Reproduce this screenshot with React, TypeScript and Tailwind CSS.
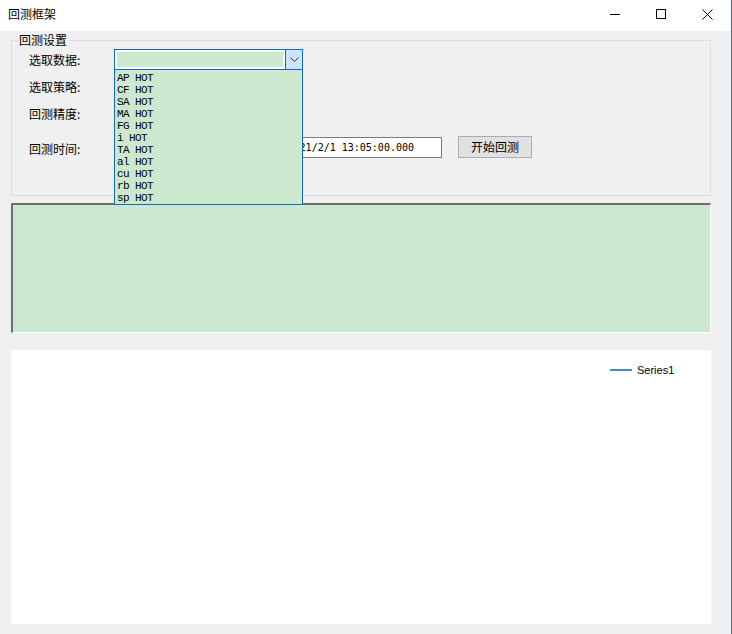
const ITEMS = ["AP HOT", "CF HOT", "SA HOT", "MA HOT", "FG HOT", "i HOT", "TA HOT", "al HOT", "cu HOT", "rb HOT", "sp HOT"];

const cjk = "font-['Microsoft_YaHei','Noto_Sans_CJK_SC',sans-serif]";

function ComboBox({ open }: { open?: boolean }) {
    return (
        <div className="relative w-[189px] h-[21px]">
            <div className="flex h-full border border-[#0f6cbd] bg-white">
                <div className="flex-1 p-[2px]">
                    <div className="h-full bg-[#cce8cf]" />
                </div>
                <div className="w-[17px] bg-[#cce4f7] border-l border-[#0f6cbd] flex items-center justify-center">
                    <svg width="9" height="5" viewBox="0 0 9 5">
                        <path d="M0.5 0.5 L4.5 4.5 L8.5 0.5" fill="none" stroke="#333" strokeWidth="1" />
                    </svg>
                </div>
            </div>
            {open && (
                <div className="absolute left-0 top-full z-10 w-[189px] h-[135px] border border-[#0f6cbd] border-t-0 bg-[#cce8cf] pl-[2px] pt-[2px] font-['Liberation_Mono',monospace] text-[11px] tracking-[-0.6px] leading-[12px] text-black">
                    {ITEMS.map(item => (
                        <div key={item} className="whitespace-pre">{item}</div>
                    ))}
                </div>
            )}
        </div>
    )
}

export default function App() {
    return (
        <div className={`w-[732px] h-[634px] flex bg-[#f0f0f0] ${cjk} text-[12px] text-black`}>
            <div className="flex-1 flex flex-col">
                {/* title bar */}
                <div className="h-[31px] bg-white flex items-center">
                    <span className="pl-[8px] -mt-[3px] flex-1">回测框架</span>
                    <div className="flex items-center h-full -mt-[3px]">
                        <div className="w-[46px] flex justify-center">
                            <div className="w-[10px] h-[1px] bg-black" />
                        </div>
                        <div className="w-[46px] flex justify-center">
                            <div className="w-[10px] h-[10px] border border-black" />
                        </div>
                        <div className="w-[46px] flex justify-center mr-[1px]">
                            <svg width="11" height="11" viewBox="0 0 11 11">
                                <path d="M0.5 0.5 L10.5 10.5 M10.5 0.5 L0.5 10.5" stroke="#000" strokeWidth="1" />
                            </svg>
                        </div>
                    </div>
                </div>

                {/* body */}
                <div className="flex-1 flex flex-col pl-[11px] pr-[20px]">
                    <fieldset className="mt-[2px] h-[163px] border border-[#dcdcdc] pl-[17px]">
                        <legend className="ml-[-11px] px-[1px] leading-[14px]">回测设置</legend>
                        <div className="flex flex-col mt-[2px]">
                            <div className="flex items-center h-[21px]">
                                <span className="w-[85px]">选取数据:</span>
                                <ComboBox open />
                            </div>
                            <div className="flex items-center h-[21px] mt-[6px]">
                                <span className="w-[85px]">选取策略:</span>
                                <ComboBox />
                            </div>
                            <div className="flex items-center h-[21px] mt-[6px]">
                                <span className="w-[85px]">回测精度:</span>
                                <ComboBox />
                            </div>
                            <div className="flex items-center h-[22px] mt-[12px]">
                                <span className="w-[83px] pt-[4px]">回测时间:</span>
                                <div className="ml-[30px] w-[300px] h-[21px] mt-[1px] border border-[#7a7a7a] bg-white flex items-center justify-end pr-[27px] font-['DejaVu_Sans_Mono',monospace] text-[10px]">
                                    2021/2/1 13:05:00.000
                                </div>
                                <button className="ml-[16px] w-[74px] h-[22px] border border-[#adadad] bg-[#e1e1e1] leading-none">开始回测</button>
                            </div>
                        </div>
                    </fieldset>

                    <div className="mt-[7px] h-[130px] border-t-2 border-l-2 border-t-[#6d6d6d] border-l-[#6d6d6d] border-r border-b border-r-white border-b-white bg-[#cce8cf]" />

                    <div className="mt-[17px] h-[274px] bg-white relative">
                        <div className="absolute left-[599px] top-[12px] flex items-center gap-[5px] font-['Liberation_Sans',sans-serif] text-[11px]">
                            <div className="w-[22px] h-[2px] bg-[#4a86d8]" />
                            <span>Series1</span>
                        </div>
                    </div>
                </div>
            </div>
            <div className="w-[1px] bg-[#2b6fa8]" />
        </div>
    )
}
